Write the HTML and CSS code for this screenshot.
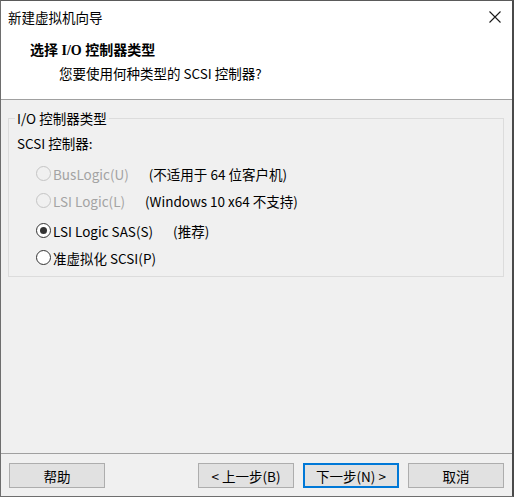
FILE: index.html
```html
<!DOCTYPE html>
<html lang="zh-CN">
<head>
<meta charset="utf-8">
<title>新建虚拟机向导</title>
<link rel="stylesheet" href="styles.css">
</head>
<body>
<div class="window">
  <div class="header">
    <div class="titlebar">
      <span class="title">新建虚拟机向导</span>
      <span class="close">
        <svg width="12" height="12" viewBox="0 0 12 12"><path d="M0.5 0.5 L11.5 11.5 M11.5 0.5 L0.5 11.5" stroke="#1a1a1a" stroke-width="1.1" fill="none"/></svg>
      </span>
    </div>
    <div class="h-title">选择 I/O 控制器类型</div>
    <div class="h-sub">您要使用何种类型的 SCSI 控制器?</div>
  </div>
  <div class="main">
    <fieldset class="group">
      <legend class="legend">I/O 控制器类型</legend>
      <div class="caption">SCSI 控制器:</div>
      <div class="row row-a disabled">
        <span class="radio"></span><span class="label">BusLogic(U)</span><span class="note">(不适用于 64 位客户机)</span>
      </div>
      <div class="row disabled">
        <span class="radio"></span><span class="label">LSI Logic(L)</span><span class="note">(Windows 10 x64 不支持)</span>
      </div>
      <div class="row row-a">
        <span class="radio checked"></span><span class="label">LSI Logic SAS(S)</span><span class="note">(推荐)</span>
      </div>
      <div class="row">
        <span class="radio"></span><span class="label">准虚拟化 SCSI(P)</span>
      </div>
    </fieldset>
  </div>
  <div class="footer">
    <button class="btn">帮助</button>
    <div class="spacer"></div>
    <div class="btn-group">
      <button class="btn">&lt; 上一步(B)</button>
      <button class="btn default">下一步(N) &gt;</button>
      <button class="btn">取消</button>
    </div>
  </div>
</div>
</body>
</html>
```

FILE: styles.css
```css
* { box-sizing: border-box; }
html, body { margin: 0; padding: 0; }
body {
  font-family: "Noto Sans CJK SC", "Noto Sans", sans-serif;
  font-size: 13.5px;
  color: #000;
  background: #f0f0f0;
}
.window {
  width: 514px;
  height: 497px;
  display: flex;
  flex-direction: column;
  background: #f0f0f0;
  border-top: 1px solid #5a5a5a;
  border-left: 1px solid #6e6e6e;
  border-right: 2px solid #4a4a4a;
  border-bottom: 1px solid #6e6e6e;
}
.header {
  height: 99px;
  background: #fff;
  border-bottom: 1px solid #a0a0a0;
}
.titlebar {
  height: 31px;
  display: flex;
  align-items: center;
  justify-content: space-between;
  padding: 0 11px 0 7px;
}
.title { line-height: 20px; }
.close { display: flex; width: 12px; height: 12px; margin-top: 1px; }
.h-title {
  margin: 9px 0 0 29px;
  line-height: 20px;
  font-family: "Liberation Serif", "Noto Sans CJK SC", serif;
  font-weight: bold;
  font-size: 14px;
}
.h-sub {
  margin: 2px 0 0 58px;
  line-height: 20px;
}
.main {
  flex: 1;
  padding: 8px 8px 0 7px;
}
.group {
  margin: 0;
  padding: 0 0 5px 0;
  border: 1px solid #dcdcdc;
  min-width: 0;
}
.legend {
  margin-left: 6px;
  padding: 0 2px;
  line-height: 20px;
}
.caption {
  line-height: 27px;
  padding-left: 8px;
  margin-top: 2px;
}
.row {
  display: flex;
  align-items: center;
  height: 27px;
  padding-left: 27px;
}
.row-a { margin-top: 3px; }
.radio {
  width: 15px;
  height: 15px;
  border-radius: 50%;
  border: 1px solid #333;
  background: #fff;
  position: relative;
  flex: none;
}
.radio.checked::after {
  content: "";
  position: absolute;
  left: 3px; top: 3px;
  width: 7px; height: 7px;
  border-radius: 50%;
  background: #333;
}
.disabled .radio { border-color: #c4c4c4; background: #f0f0f0; }
.disabled .label { color: #a3a3a3; }
.label { margin-left: 2px; line-height: 20px; }
.note { margin-left: 20px; line-height: 20px; }
.footer {
  height: 43px;
  border-top: 1px solid #a0a0a0;
  display: flex;
  align-items: flex-start;
  padding: 9px 8px 0 8px;
}
.spacer { flex: 1; }
.btn-group { display: flex; gap: 9px; }
.btn {
  width: 96px;
  height: 25px;
  margin: 0;
  padding: 0;
  background: #e1e1e1;
  border: 1px solid #adadad;
  font-family: "Noto Sans CJK SC", "Noto Sans", sans-serif;
  font-size: 13.5px;
  color: #000;
  line-height: 20px;
}
.btn.default {
  border-color: #0078d7;
  box-shadow: inset 0 0 0 1px #0078d7;
}
```
